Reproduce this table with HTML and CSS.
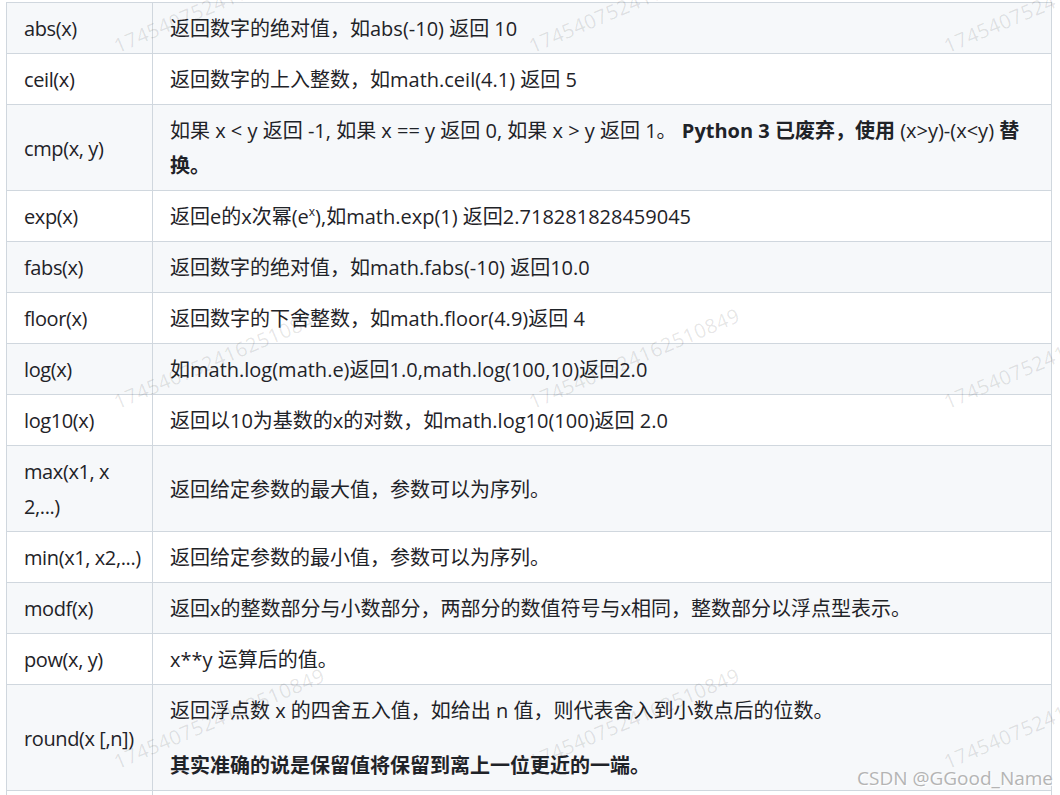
FILE: index.html
```html
<!DOCTYPE html>
<html lang="zh-CN">
  <head>
    <meta charset="UTF-8" />
    <title>Python 数学函数</title>
    <link rel="stylesheet" href="styles.css">
  </head>
  <body>
    <div class="page">
      <table class="func-table">
        <colgroup>
          <col class="col-name" />
          <col />
        </colgroup>
        <tbody>
          <tr>
            <td>abs(x)</td>
            <td>返回数字的绝对值，如abs(-10) 返回 10</td>
          </tr>
          <tr>
            <td>ceil(x)</td>
            <td>返回数字的上入整数，如math.ceil(4.1) 返回 5</td>
          </tr>
          <tr>
            <td>cmp(x, y)</td>
            <td>如果 x &lt; y 返回 -1, 如果 x == y 返回 0, 如果 x &gt; y 返回 1。 <strong>Python 3 已废弃，使用</strong> (x&gt;y)-(x&lt;y) <strong>替换。</strong></td>
          </tr>
          <tr>
            <td>exp(x)</td>
            <td>返回e的x次幂(e<sup>x</sup>),如math.exp(1) 返回2.718281828459045</td>
          </tr>
          <tr>
            <td>fabs(x)</td>
            <td>返回数字的绝对值，如math.fabs(-10) 返回10.0</td>
          </tr>
          <tr>
            <td>floor(x)</td>
            <td>返回数字的下舍整数，如math.floor(4.9)返回 4</td>
          </tr>
          <tr>
            <td>log(x)</td>
            <td>如math.log(math.e)返回1.0,math.log(100,10)返回2.0</td>
          </tr>
          <tr>
            <td>log10(x)</td>
            <td>返回以10为基数的x的对数，如math.log10(100)返回 2.0</td>
          </tr>
          <tr>
            <td>max(x1, x<br>2,...)</td>
            <td>返回给定参数的最大值，参数可以为序列。</td>
          </tr>
          <tr>
            <td class="nowrap">min(x1, x2,...)</td>
            <td>返回给定参数的最小值，参数可以为序列。</td>
          </tr>
          <tr>
            <td>modf(x)</td>
            <td>返回x的整数部分与小数部分，两部分的数值符号与x相同，整数部分以浮点型表示。</td>
          </tr>
          <tr>
            <td>pow(x, y)</td>
            <td>x**y 运算后的值。</td>
          </tr>
          <tr>
            <td class="nowrap">round(x [,n])</td>
            <td>
              <p>返回浮点数 x 的四舍五入值，如给出 n 值，则代表舍入到小数点后的位数。</p>
              <p><strong>其实准确的说是保留值将保留到离上一位更近的一端。</strong></p>
            </td>
          </tr>
          <tr>
            <td>sqrt(x)</td>
            <td>返回数字x的平方根。</td>
          </tr>
        </tbody>
      </table>

      <!-- watermark layer -->
      <div class="marks">
        <span class="mark" style="left: 120px; top: 32px">1745407524162510849</span>
        <span class="mark" style="left: 535px; top: 32px">1745407524162510849</span>
        <span class="mark" style="left: 950px; top: 32px">1745407524162510849</span>
        <span class="mark" style="left: 120px; top: 388px">1745407524162510849</span>
        <span class="mark" style="left: 535px; top: 388px">1745407524162510849</span>
        <span class="mark" style="left: 950px; top: 388px">1745407524162510849</span>
        <span class="mark" style="left: 120px; top: 748px">1745407524162510849</span>
        <span class="mark" style="left: 535px; top: 748px">1745407524162510849</span>
        <span class="mark" style="left: 950px; top: 748px">1745407524162510849</span>
        <span class="csdn">CSDN @GGood_Name</span>
      </div>
    </div>
  </body>
</html>
```

FILE: styles.css
```css
body {
  margin: 0;
  background: #ffffff;
  font-family: "Open Sans", "Noto Sans CJK SC", sans-serif;
  color: #1f2328;
  overflow: hidden;
}

.page {
  position: relative;
  padding: 2px 0 0 6px;
}

.func-table {
  width: 1046px;
  border-collapse: collapse;
  table-layout: fixed;
  font-size: 20px;
  line-height: 35px;
}

.col-name {
  width: 146px;
}

.func-table td {
  border: 1px solid #d0d7de;
  padding: 8px 16px 7px 17px;
  vertical-align: middle;
  word-break: break-word;
}

.func-table td:first-child {
  letter-spacing: -0.4px;
}

.func-table td.nowrap {
  white-space: nowrap;
}

.func-table tr:nth-child(odd) {
  background-color: #f6f8fa;
}

.func-table tr:nth-child(even) {
  background-color: #ffffff;
}

.func-table p {
  margin: 0 0 20px 0;
}

.func-table p:last-child {
  margin-bottom: 0;
}

.func-table strong {
  font-weight: 700;
}

.func-table sup {
  font-size: 12px;
  line-height: 0;
  vertical-align: 8px;
}

.marks {
  position: absolute;
  top: 0;
  left: 0;
  right: 0;
  bottom: 0;
  pointer-events: none;
}

.mark {
  position: absolute;
  font-size: 20px;
  color: rgba(0, 0, 0, 0.1);
  transform: rotate(-23deg);
  transform-origin: 0 100%;
  white-space: nowrap;
  letter-spacing: 0.5px;
}

.csdn {
  position: absolute;
  left: 857px;
  top: 765px;
  font-size: 19px;
  color: #b4b4b4;
  text-shadow: 1px 1px 0 #ffffff;
  white-space: nowrap;
}
```
